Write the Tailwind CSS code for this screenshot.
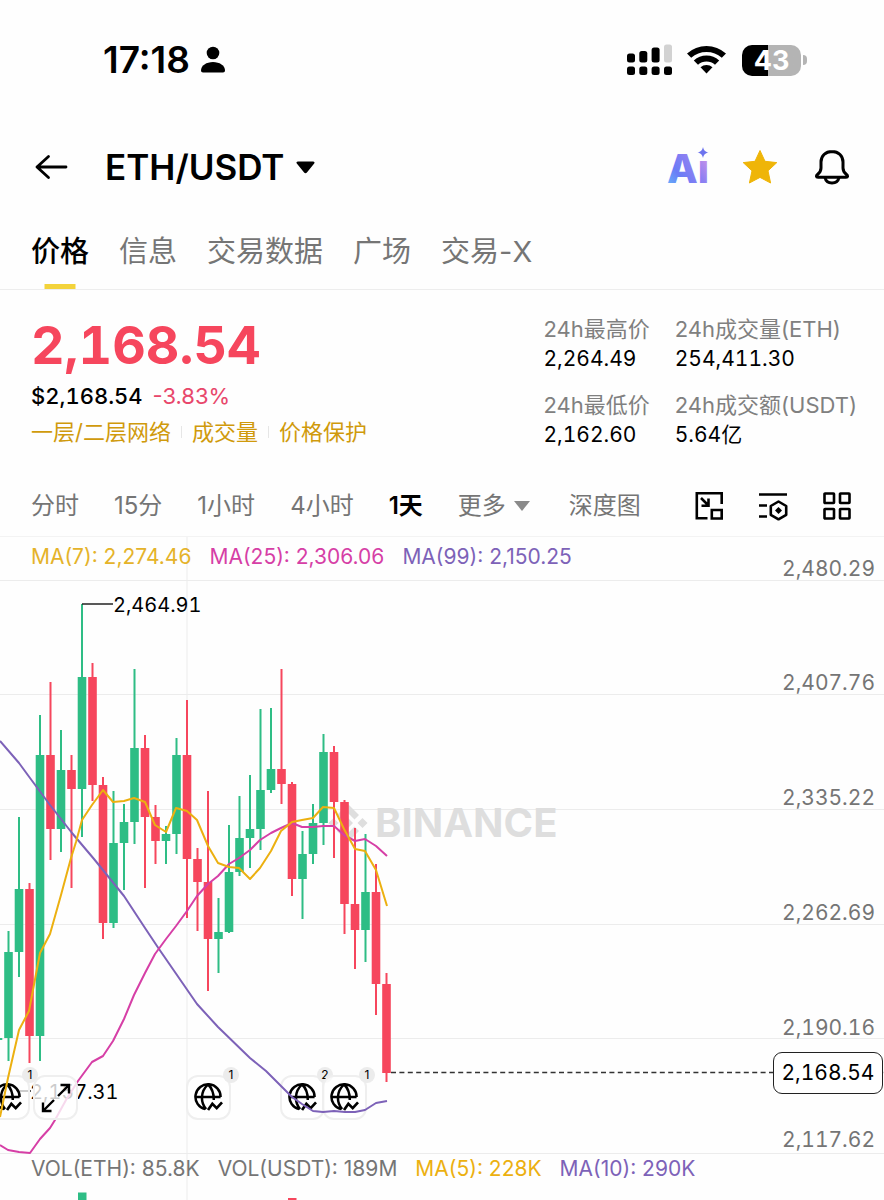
<!DOCTYPE html>
<html lang="zh-CN">
<head>
  <meta charset="UTF-8" />
  <meta name="viewport" content="width=device-width, initial-scale=1.0" />
  <title>ETH/USDT</title>
  <script src="https://cdn.jsdelivr.net/npm/@tailwindcss/browser@4"></script>
</head>
<body class="bg-[#fefefe] text-black font-['Inter','Noto_Sans_CJK_SC',sans-serif] overflow-x-hidden">

  <!-- Status bar -->
  <div class="flex items-center justify-between h-[120px] pl-[103px] pr-[77px]">
    <div class="flex items-center gap-2.5">
      <span class="text-[37px] leading-10 font-semibold">17:18</span>
      <svg class="w-[26px] h-[28px]" viewBox="0 0 26 28" aria-hidden="true">
        <circle cx="13" cy="7" r="6.3" />
        <path d="M1 24.500C1 19.500 6.500 16 13 16s12 3.500 12 8.500c0 1.300-.8 2-2 2H3c-1.200 0-2-.7-2-2z" />
      </svg>
    </div>
    <div class="flex items-center gap-[15px]">
      <svg class="w-[45px] h-[32px]" viewBox="0 0 45 32" aria-hidden="true">
        <rect x="0" y="9.500" width="8" height="9" rx="2.500" />
        <rect x="12.300" y="7" width="8" height="11.500" rx="2.500" />
        <rect x="24.600" y="3.500" width="8" height="15" rx="2.500" />
        <rect x="37" y="0.500" width="8" height="18" rx="2.500" fill="#d2d2d2" />
        <rect x="0" y="22.500" width="8" height="8.500" rx="2.500" />
        <rect x="12.300" y="22.500" width="8" height="8.500" rx="2.500" />
        <rect x="24.600" y="22.500" width="8" height="8.500" rx="2.500" />
        <rect x="37" y="22.500" width="8" height="8.500" rx="2.500" />
      </svg>
      <svg class="w-[40px] h-[30px]" viewBox="0 0 40 30" aria-hidden="true">
        <path d="M0 8.500a29 29 0 0 1 39 0l-4.200 4.300a23 23 0 0 0-30.600 0z" />
        <path d="M6.800 15.400a19 19 0 0 1 25.400 0l-4.200 4.300a13 13 0 0 0-17 0z" />
        <path d="M13.500 22.300a9 9 0 0 1 12 0l-6 6.200z" />
      </svg>
      <div class="flex items-center gap-0.5">
        <div class="w-[59px] h-[31px] rounded-[10px] bg-linear-to-r from-black from-[44%] to-[#b4b4b4] to-[44%] text-white text-[27px] leading-[31px] font-bold text-center">43</div>
        <div class="w-1 h-2.5 rounded-r-full bg-[#b4b4b4]"></div>
      </div>
    </div>
  </div>

  <!-- Header -->
  <header class="flex items-center justify-between h-[94px] pl-[35px] pr-[34px]">
    <div class="flex items-center">
      <button type="button" aria-label="返回">
        <svg class="w-[33px] h-[26px]" viewBox="0 0 33 26" fill="none" stroke="#000" stroke-width="2.800" stroke-linecap="round" stroke-linejoin="round">
          <path d="M31 13H2M13.500 2.500L2 13l11.500 10.500" />
        </svg>
      </button>
      <button type="button" class="flex items-center gap-3 ml-[37px]">
        <span class="text-[35px] leading-10 font-semibold">ETH/USDT</span>
        <svg class="w-[19px] h-[13px]" viewBox="0 0 19 13"><path d="M2 .5h15c1.500 0 2 1 1.200 2l-7.300 9c-.8 1-2 1-2.800 0l-7.300-9C0 1.500.5.5 2 .5z" /></svg>
      </button>
    </div>
    <div class="flex items-center gap-[34px]">
      <button type="button" aria-label="Ai">
        <svg class="w-[48px] h-[56px] overflow-visible" viewBox="0 -8 48 56">
          <defs>
            <linearGradient id="ai" x1="0" y1="1" x2="1" y2="0.200">
              <stop offset="0" stop-color="#63c3fb" />
              <stop offset=".35" stop-color="#6a7cf6" />
              <stop offset=".65" stop-color="#8d80f2" />
              <stop offset="1" stop-color="#d897e6" />
            </linearGradient>
          </defs>
          <text x="7" y="36" font-size="40" font-weight="800" fill="url(#ai)">Aı</text>
          <path d="M43 0c.9 3.400 2 4.600 5.500 5.500C45 6.400 43.900 7.600 43 11c-.9-3.400-2-4.600-5.500-5.500C41 4.600 42.100 3.400 43 0z" fill="#6d74ee" />
        </svg>
      </button>
      <button type="button" aria-label="收藏">
        <svg class="w-[36px] h-[36px]" viewBox="0 0 36 36"><path d="M18 1.500l5 10.800 11.800 1.300-8.800 8.200 2.600 12.200L18 28.400 7.400 34 10 21.800 1.200 13.600 13 12.300z" fill="#efb508" stroke="#efb508" stroke-linejoin="round" /></svg>
      </button>
      <button type="button" aria-label="提醒" class="ml-0.5">
        <svg class="w-[36px] h-[36px]" viewBox="0 0 36 36" fill="none" stroke="#000" stroke-width="3" stroke-linejoin="round">
          <path d="M18 2.500c-6.600 0-11 4.500-11 10.500v6c0 3-1 4.500-3.500 6.500-1.500 1.200-1.500 2.700.5 2.700h28c2 0 2-1.500.5-2.700-2.500-2-3.500-3.500-3.500-6.500v-6c0-6-4.400-10.500-11-10.500z" />
          <path d="M11 28.500c.8 3.800 3.800 5.500 7 5.500s6.200-1.700 7-5.500" />
        </svg>
      </button>
    </div>
  </header>

  <!-- Tabs -->
  <nav class="flex gap-[30px] h-[76px] px-[31px] border-b border-[#ededed] text-[29px] leading-[75px] text-[#757575]">
    <a href="#price" class="relative font-medium text-black">价格<span class="absolute bottom-0 left-1/2 -translate-x-1/2 w-[31px] h-[5px] bg-[#f3d33b]"></span></a>
    <a href="#info">信息</a>
    <a href="#data">交易数据</a>
    <a href="#square">广场</a>
    <a href="#trade-x">交易-X</a>
  </nav>

  <!-- Price summary -->
  <section class="flex justify-between h-[182px] pl-[31px] pr-[27px]">
    <div class="pt-[26px]">
      <div class="text-[52px] leading-[60px] font-bold tabular-nums text-[#f6465d]">2,168.54</div>
      <div class="flex gap-2.5 mt-1 text-[22px] leading-8">
        <span class="font-medium tabular-nums">$2,168.54</span>
        <span class="text-[#e8476b]">-3.83%</span>
      </div>
      <div class="flex items-center mt-1 text-[22px] leading-8 text-[#d09a0c]">
        <a href="#layer">一层/二层网络</a>
        <span class="w-px h-3 mx-2.5 bg-[#e6e6e6]"></span>
        <a href="#volume">成交量</a>
        <span class="w-px h-3 mx-2.5 bg-[#e6e6e6]"></span>
        <a href="#protection">价格保护</a>
      </div>
    </div>
    <dl class="grid grid-cols-[auto_auto] gap-x-[25px] gap-y-4 content-start pt-6 text-[21px] leading-[30px]">
      <div><dt class="text-[22px] text-[#808080]">24h最高价</dt><dd class="tabular-nums">2,264.49</dd></div>
      <div><dt class="text-[22px] text-[#808080]">24h成交量(ETH)</dt><dd class="tabular-nums">254,411.30</dd></div>
      <div><dt class="text-[22px] text-[#808080]">24h最低价</dt><dd class="tabular-nums">2,162.60</dd></div>
      <div><dt class="text-[22px] text-[#808080]">24h成交额(USDT)</dt><dd class="tabular-nums">5.64亿</dd></div>
    </dl>
  </section>

  <!-- Intervals -->
  <div class="flex items-center justify-between h-[65px] pt-1 pl-[31px] pr-8 border-b border-[#f3f3f3] text-[24px] leading-8 text-[#757575]">
    <div class="flex items-center gap-[35px]">
      <button type="button">分时</button>
      <button type="button">15分</button>
      <button type="button">1小时</button>
      <button type="button">4小时</button>
      <button type="button" class="font-semibold text-black">1天</button>
      <button type="button" class="flex items-center gap-2">更多
        <svg class="w-4 h-2.5" viewBox="0 0 16 10" fill="#8a8a8a"><path d="M0 0h16L8 10z" /></svg>
      </button>
      <button type="button" class="ml-1">深度图</button>
    </div>
    <div class="flex items-center gap-[34px]">
      <button type="button" aria-label="画中画">
        <svg class="w-[30px] h-[30px]" viewBox="0 0 30 30" fill="none" stroke="#000" stroke-width="2.600">
          <path d="M13.500 27.200H2.800V2.300h24.900V13" />
          <path d="M17.800 19h9.900v8.500h-9.900z" />
          <path d="M7 7l7 7M14.500 7.500v7.200H7.500" />
        </svg>
      </button>
      <button type="button" aria-label="指标设置">
        <svg class="w-[30px] h-[30px]" viewBox="0 0 30 30" fill="none" stroke="#000" stroke-width="2.600">
          <path d="M1 3.500h28M1 14.500h8M1 25.500h8" />
          <path d="M20.500 10.500l7.700 4.500v8.800l-7.700 4.500-7.700-4.500V15z" stroke-linejoin="round" />
          <path d="M20.500 15.900l3.500 3.500-3.500 3.500-3.500-3.500z" fill="#000" stroke="none" />
        </svg>
      </button>
      <button type="button" aria-label="布局">
        <svg class="w-[30px] h-[30px]" viewBox="0 0 30 30" fill="none" stroke="#000" stroke-width="2.600">
          <rect x="2.500" y="2.500" width="9.500" height="9.500" rx=".5" /><rect x="18" y="2.500" width="9.500" height="9.500" rx=".5" />
          <rect x="2.500" y="18" width="9.500" height="9.500" rx=".5" /><rect x="18" y="18" width="9.500" height="9.500" rx=".5" />
        </svg>
      </button>
    </div>
  </div>

  <!-- Chart -->
  <main class="relative h-[663px] overflow-hidden">
    <svg class="absolute inset-0 w-full h-full tabular-nums">
      <g transform="translate(0 -537)">
        <g stroke="#ececec">
          <line x1="0" x2="100%" y1="580.500" y2="580.500" /><line x1="0" x2="100%" y1="694.500" y2="694.500" />
          <line x1="0" x2="100%" y1="809.500" y2="809.500" /><line x1="0" x2="100%" y1="924.500" y2="924.500" />
          <line x1="0" x2="100%" y1="1038.500" y2="1038.500" /><line x1="0" x2="100%" y1="1153.500" y2="1153.500" />
          <line x1="187" x2="187" y1="537" y2="1200" />
        </g>
        <!-- Watermark -->
        <g fill="#dedede">
          <path d="M348 804l11 11-4.500 4.500-6.500-6.500-6.500 6.500-4.500-4.500zM348 842l11-11-4.500-4.500-6.500 6.500-6.500-6.500-4.500 4.500zM348 818l5 5-5 5-5-5zM362.500 818l5 5-5 5-5-5zM333.500 818l5 5-5 5-5-5z" />
          <text x="375" y="837" font-size="40" font-weight="700">BINANCE</text>
        </g>
        <g id="candles"></g>
        <path d="M78 1192.500h8.500v8H78z" fill="#2ebd85" /><path d="M288 1198h8.500v3H288z" fill="#f6465d" />
        <path d="M82 604h31" stroke="#222" stroke-width="1.500" /><path d="M20 1091h11" stroke="#222" stroke-width="1.500" />
        <g font-size="20">
          <text x="113" y="612">2,464.91</text>
          <text x="30" y="1099">2,157.31</text>
        </g>
        <line x1="391" x2="100%" y1="1072.500" y2="1072.500" stroke="#333" stroke-width="1.500" stroke-dasharray="5 3.400" />
        <g font-size="21" fill="#757575" text-anchor="end">
          <text x="100%" dx="-9" y="576">2,480.29</text>
          <text x="100%" dx="-9" y="690">2,407.76</text>
          <text x="100%" dx="-9" y="805">2,335.22</text>
          <text x="100%" dx="-9" y="920">2,262.69</text>
          <text x="100%" dx="-9" y="1035">2,190.16</text>
          <text x="100%" dx="-9" y="1147">2,117.62</text>
        </g>
      </g>
    </svg>

    <svg class="hidden">
      <symbol id="globe" viewBox="0 0 30 30">
        <g fill="none" stroke="#000" stroke-width="2.600">
          <path d="M11.500 27A13 13 0 1 1 27.500 14.500M1.500 14.500h26M14.500 1.500C6.500 9 6.500 20 12.500 27M14.500 1.500c4.500 4 6 8.500 6 16" />
          <path d="M14.500 28l4.500-6.500 4.500 4.500 5.500-6" stroke-width="2.800" />
        </g>
      </symbol>
    </svg>

    <!-- Event markers -->
    <button type="button" class="absolute left-[-15px] top-[538px] w-[45px] h-[45px] rounded-xl border-2 border-[#efefef] bg-white/70 flex items-center justify-center" aria-label="事件">
      <svg class="w-[29px] h-[29px]"><use href="#globe" /></svg>
      <span class="absolute -top-2.5 -right-2.5 size-4 rounded-full bg-[#ececec] text-[12px] leading-4">1</span>
    </button>
    <button type="button" class="absolute left-[186px] top-[538px] w-[45px] h-[45px] rounded-xl border-2 border-[#efefef] bg-white/70 flex items-center justify-center" aria-label="事件">
      <svg class="w-[29px] h-[29px]"><use href="#globe" /></svg>
      <span class="absolute -top-2.5 -right-2.5 size-4 rounded-full bg-[#ececec] text-[12px] leading-4">1</span>
    </button>
    <button type="button" class="absolute left-[280px] top-[538px] w-[45px] h-[45px] rounded-xl border-2 border-[#efefef] bg-white/70 flex items-center justify-center" aria-label="事件">
      <svg class="w-[29px] h-[29px]"><use href="#globe" /></svg>
      <span class="absolute -top-2.5 -right-2.5 size-4 rounded-full bg-[#ececec] text-[12px] leading-4">2</span>
    </button>
    <button type="button" class="absolute left-[322px] top-[538px] w-[45px] h-[45px] rounded-xl border-2 border-[#efefef] bg-white/70 flex items-center justify-center" aria-label="事件">
      <svg class="w-[29px] h-[29px]"><use href="#globe" /></svg>
      <span class="absolute -top-2.5 -right-2.5 size-4 rounded-full bg-[#ececec] text-[12px] leading-4">1</span>
    </button>

    <!-- Moving averages -->
    <svg class="absolute inset-0 w-full h-full pointer-events-none">
      <g transform="translate(0 -537)" fill="none" stroke-width="2" stroke-linejoin="round">
        <polyline stroke="#7d62b8" points="0,741 19,763 30,778 50,805 72,833 94,859 124,896 145,928 159,949 197,1004 218,1027 250,1058 266,1071 281,1086 292,1097 302,1104 313,1111 323,1112 334,1111 345,1112 355,1112 365,1110 376,1103 387,1101" />
        <polyline stroke="#d63fa6" points="0,1145 8,1150 19,1152 30,1153 40,1139 50,1128 55,1120 66,1100 78,1081 92,1062 103,1056 113,1041 124,1019 134,995 145,973 155,954 166,939 176,926 187,911 197,896 208,884 218,876 229,864 239,858 250,850 260,840 271,833 281,828 292,823 302,827 313,827 323,826 334,826 344,835 355,841 365,839 376,846 387,856" />
        <polyline stroke="#ecb010" points="0,1117 8,1078 19,1030 29,1011 40,953 50,934 61,895 71,858 76,842 82,820 92,805 103,790 113,802 124,801 134,798 145,802 155,825 166,832 176,808 187,811 197,820 208,846 218,863 229,867 239,868 250,879 260,868 271,851 281,831 292,822 302,820 313,818 323,807 334,808 344,829 355,849 365,851 376,870 387,906" />
      </g>
    </svg>

    <button type="button" class="absolute left-[33px] top-[538px] w-[45px] h-[45px] rounded-xl border-2 border-[#efefef] bg-white/80 flex items-center justify-center" aria-label="全屏">
      <svg class="w-[30px] h-[30px]" viewBox="0 0 30 30" fill="none" stroke="#000" stroke-width="2.400"><path d="M17 13L28 2M19.500 2H28v8.500M13 17L2 28M10.500 28H2v-8.500" /></svg>
    </button>

    <div class="absolute top-1 left-[31px] flex gap-[18px] text-[21px] leading-8">
      <span class="text-[#e5b32a]">MA(7): 2,274.46</span>
      <span class="text-[#d63fa6]">MA(25): 2,306.06</span>
      <span class="text-[#7d62b8]">MA(99): 2,150.25</span>
    </div>
    <div class="absolute top-[616px] left-[31px] flex gap-[18px] text-[21px] leading-8">
      <span class="text-[#757575]">VOL(ETH): 85.8K</span>
      <span class="text-[#757575]">VOL(USDT): 189M</span>
      <span class="text-[#ecb010]">MA(5): 228K</span>
      <span class="text-[#7d62b8]">MA(10): 290K</span>
    </div>
    <div class="absolute right-px top-[515px] w-[110px] h-[42px] rounded-[9px] border border-[#222] bg-white text-center text-[21px] leading-10 tabular-nums">2,168.54</div>
  </main>

  <script>
    // [high, body top, body bottom, low, up]
    const candles = [
      [1038, 1038, 1040, 1091, 1],
      [931, 952, 1038, 1061, 1], [817, 889, 952, 977, 1], [883, 889, 1036, 1063, 0], [715, 755, 1036, 1061, 1],
      [682, 755, 829, 860, 0], [730, 770, 829, 852, 1], [755, 770, 789, 888, 0], [604, 677, 789, 837, 1],
      [663, 677, 785, 801, 0], [777, 785, 923, 939, 0], [791, 843, 923, 928, 1], [804, 822, 843, 890, 1],
      [669, 748, 822, 844, 1], [735, 748, 817, 888, 0], [805, 817, 841, 864, 0], [826, 834, 841, 864, 1],
      [738, 755, 834, 854, 1], [700, 755, 859, 918, 0], [848, 859, 882, 931, 0], [791, 882, 939, 991, 0],
      [898, 932, 939, 973, 1], [825, 872, 932, 933, 1], [796, 838, 872, 876, 1], [775, 829, 838, 868, 1],
      [709, 790, 829, 850, 1], [708, 769, 790, 793, 1], [669, 769, 784, 804, 0], [782, 784, 879, 896, 0],
      [831, 854, 879, 919, 1], [804, 823, 854, 864, 1], [734, 752, 823, 845, 1], [746, 752, 802, 858, 0],
      [800, 802, 904, 934, 0], [828, 904, 930, 969, 0], [834, 892, 930, 962, 1], [864, 892, 984, 1015, 0],
      [973, 984, 1073, 1082, 0]
    ];
    document.getElementById('candles').innerHTML = candles.map(([high, top, bottom, low, up], i) => {
      const x = -2 + i * 10.5;
      const color = up ? '#2ebd85' : '#f6465d';
      return `<path d="M${x - 1} ${high}h2V${low}h-2z" fill="${color}"/>` +
        `<rect x="${x - 4.3}" y="${top}" width="8.6" height="${bottom - top}" fill="${color}"/>`;
    }).join('');
  </script>
</body>
</html>
